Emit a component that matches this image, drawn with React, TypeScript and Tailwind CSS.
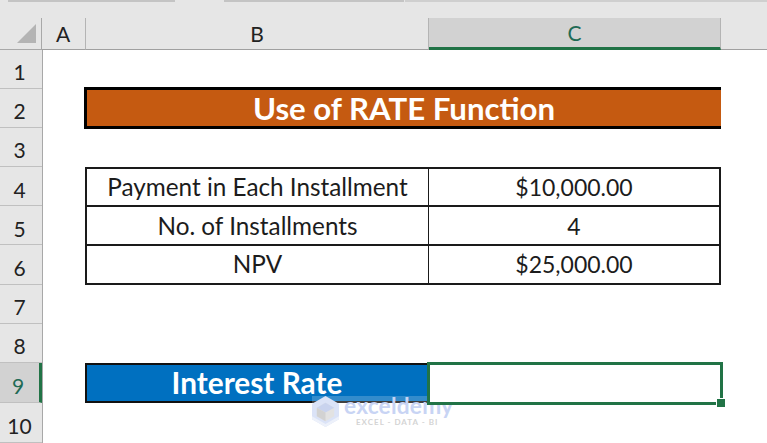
import React from 'react';

const rows = [1, 2, 3, 4, 5, 6, 7, 8, 9, 10];

const sheetFont = { fontFamily: 'Lato, "Open Sans", sans-serif' };

function ColumnHeader({ label, selected, className }: { label: string; selected?: boolean; className: string }) {
  return (
    <div
      className={
        'flex h-full items-center justify-center border-r border-[#b4b4b4] text-[21px] ' +
        className +
        (selected ? ' border-b-[3px] border-b-[#217346] bg-[#d2d2d2] text-[#1f6b55]' : ' border-b border-b-[#a0a0a0] text-[#222]')
      }
    >
      {label}
    </div>
  );
}

function Cell({ children, className }: { children?: React.ReactNode; className?: string }) {
  return <div className={'flex items-center justify-center text-[#1c1c1c] ' + (className ?? '')}>{children}</div>;
}

function Watermark() {
  return (
    <>
      <div className="absolute left-[312px] top-[396px] h-[8px] w-[141px] bg-white/20" />
      <div className="absolute left-[312px] top-[396px] flex items-start gap-[5px]">
        <svg width="27" height="31" viewBox="0 0 28 32">
          <path d="M14 0 L28 8 L28 24 L14 32 L0 24 L0 8 Z" fill="#dbe3f7" />
          <path d="M14 7 L23 12 L23 21 L14 26 L5 21 L5 12 Z" fill="#e2e2e2" />
          <path d="M14 7 L23 12 L14 17 L5 12 Z" fill="#c9d3ee" />
          <path d="M14 17 L14 26 L5 21 L5 12 Z" fill="#d2d2d2" />
          <path d="M0 24 L14 32 L28 24 L28 21 L14 29 L0 21 Z" fill="#edf1fa" />
        </svg>
        <div className="flex flex-col gap-[1px]">
          <span className="text-[22.7px] font-bold leading-[20px] tracking-[0.2px] text-[#c8d4f4]">exceldemy</span>
          <span className="pl-[12px] text-[8px] font-bold leading-[10px] tracking-[1px] text-[#d4d4d4]">EXCEL - DATA - BI</span>
        </div>
      </div>
    </>
  );
}

export default function App() {
  return (
    <div className="relative h-[443px] w-[767px] overflow-hidden bg-white" style={sheetFont}>
      {/* ribbon remnant */}
      <div className="flex h-[18px] items-start bg-[#e6e6e6]">
        <div className="ml-[8px] h-[2px] w-[167px] bg-[#c4c4c4]" />
        <div className="ml-[49px] h-[2px] w-[180px] bg-[#c4c4c4]" />
        <div className="ml-[1px] h-[2px] flex-1 bg-[#cfcfcf]" />
      </div>

      {/* column headers */}
      <div className="flex h-[32px] bg-[#e6e6e6]">
        <div className="flex w-[42px] items-end justify-end border-r border-b border-[#a8a8a8] pb-[6px] pr-[5px]">
          <svg width="19" height="19" viewBox="0 0 20 20">
            <path d="M20 0 L20 20 L0 20 Z" fill="#b4b4b4" />
          </svg>
        </div>
        <ColumnHeader label="A" className="w-[44px] pr-[1px]" />
        <ColumnHeader label="B" className="w-[343px]" />
        <ColumnHeader label="C" selected className="w-[292px]" />
        <div className="flex-1 border-b border-[#a0a0a0]" />
      </div>

      <div className="flex">
        {/* row headers */}
        <div className="grid w-[43px] grid-rows-[repeat(8,39.1px)_40px_40px] border-r border-[#a8a8a8] bg-[#e6e6e6]">
          {rows.map((r) => (
            <div
              key={r}
              className={
                'flex items-center justify-center pr-[3px] pt-[6px] text-[21px] ' +
                (r === 9
                  ? 'border-r-[3px] border-b border-r-[#217346] border-b-[#c0c0c0] bg-[#d2d2d2] text-[#1f6b55]'
                  : 'border-b border-[#c0c0c0] text-[#222]')
              }
            >
              {r}
            </div>
          ))}
        </div>

        {/* sheet cells */}
        <div className="grid flex-1 grid-cols-[42px_344px_292px_1fr] grid-rows-[repeat(8,39.1px)_40px_40px]">
          <div className="col-span-2 col-start-2 row-start-2 -mt-[2px] -mb-[1px] -ml-[1px] flex items-center justify-center border-y-[3px] border-l-[3px] border-black bg-[#c55a11] text-[31.2px] font-bold text-white">
            Use of RATE Function
          </div>

          <Cell className="col-start-2 row-start-4 border-2 border-b border-r border-[#1a1a1a] text-[24.3px]">Payment in Each Installment</Cell>
          <Cell className="col-start-3 row-start-4 border-t-2 border-r-2 border-b border-[#1a1a1a] text-[23px]">$10,000.00</Cell>
          <Cell className="col-start-2 row-start-5 border-x-2 border-b border-t border-[#1a1a1a] border-r-[1px] text-[24.3px]">No. of Installments</Cell>
          <Cell className="col-start-3 row-start-5 border-r-2 border-b border-t border-[#1a1a1a] text-[23px]">4</Cell>
          <Cell className="col-start-2 row-start-6 border-2 border-t border-r border-[#1a1a1a] text-[24.3px]">NPV</Cell>
          <Cell className="col-start-3 row-start-6 border-r-2 border-b-2 border-t border-[#1a1a1a] text-[23px]">$25,000.00</Cell>

          <div className="col-start-2 row-start-9 flex items-center justify-center border-2 border-[#111] bg-[#0070c0] pt-[1px] text-[29.8px] font-bold text-white">
            Interest Rate
          </div>
        </div>
      </div>

      <Watermark />

      {/* active cell selection */}
      <div className="absolute left-[427px] top-[362px] h-[43px] w-[296px] border-[3px] border-[#217346]" />
      <div className="absolute left-[716px] top-[398px] h-[10px] w-[10px] border border-white bg-[#217346]" />
    </div>
  );
}
